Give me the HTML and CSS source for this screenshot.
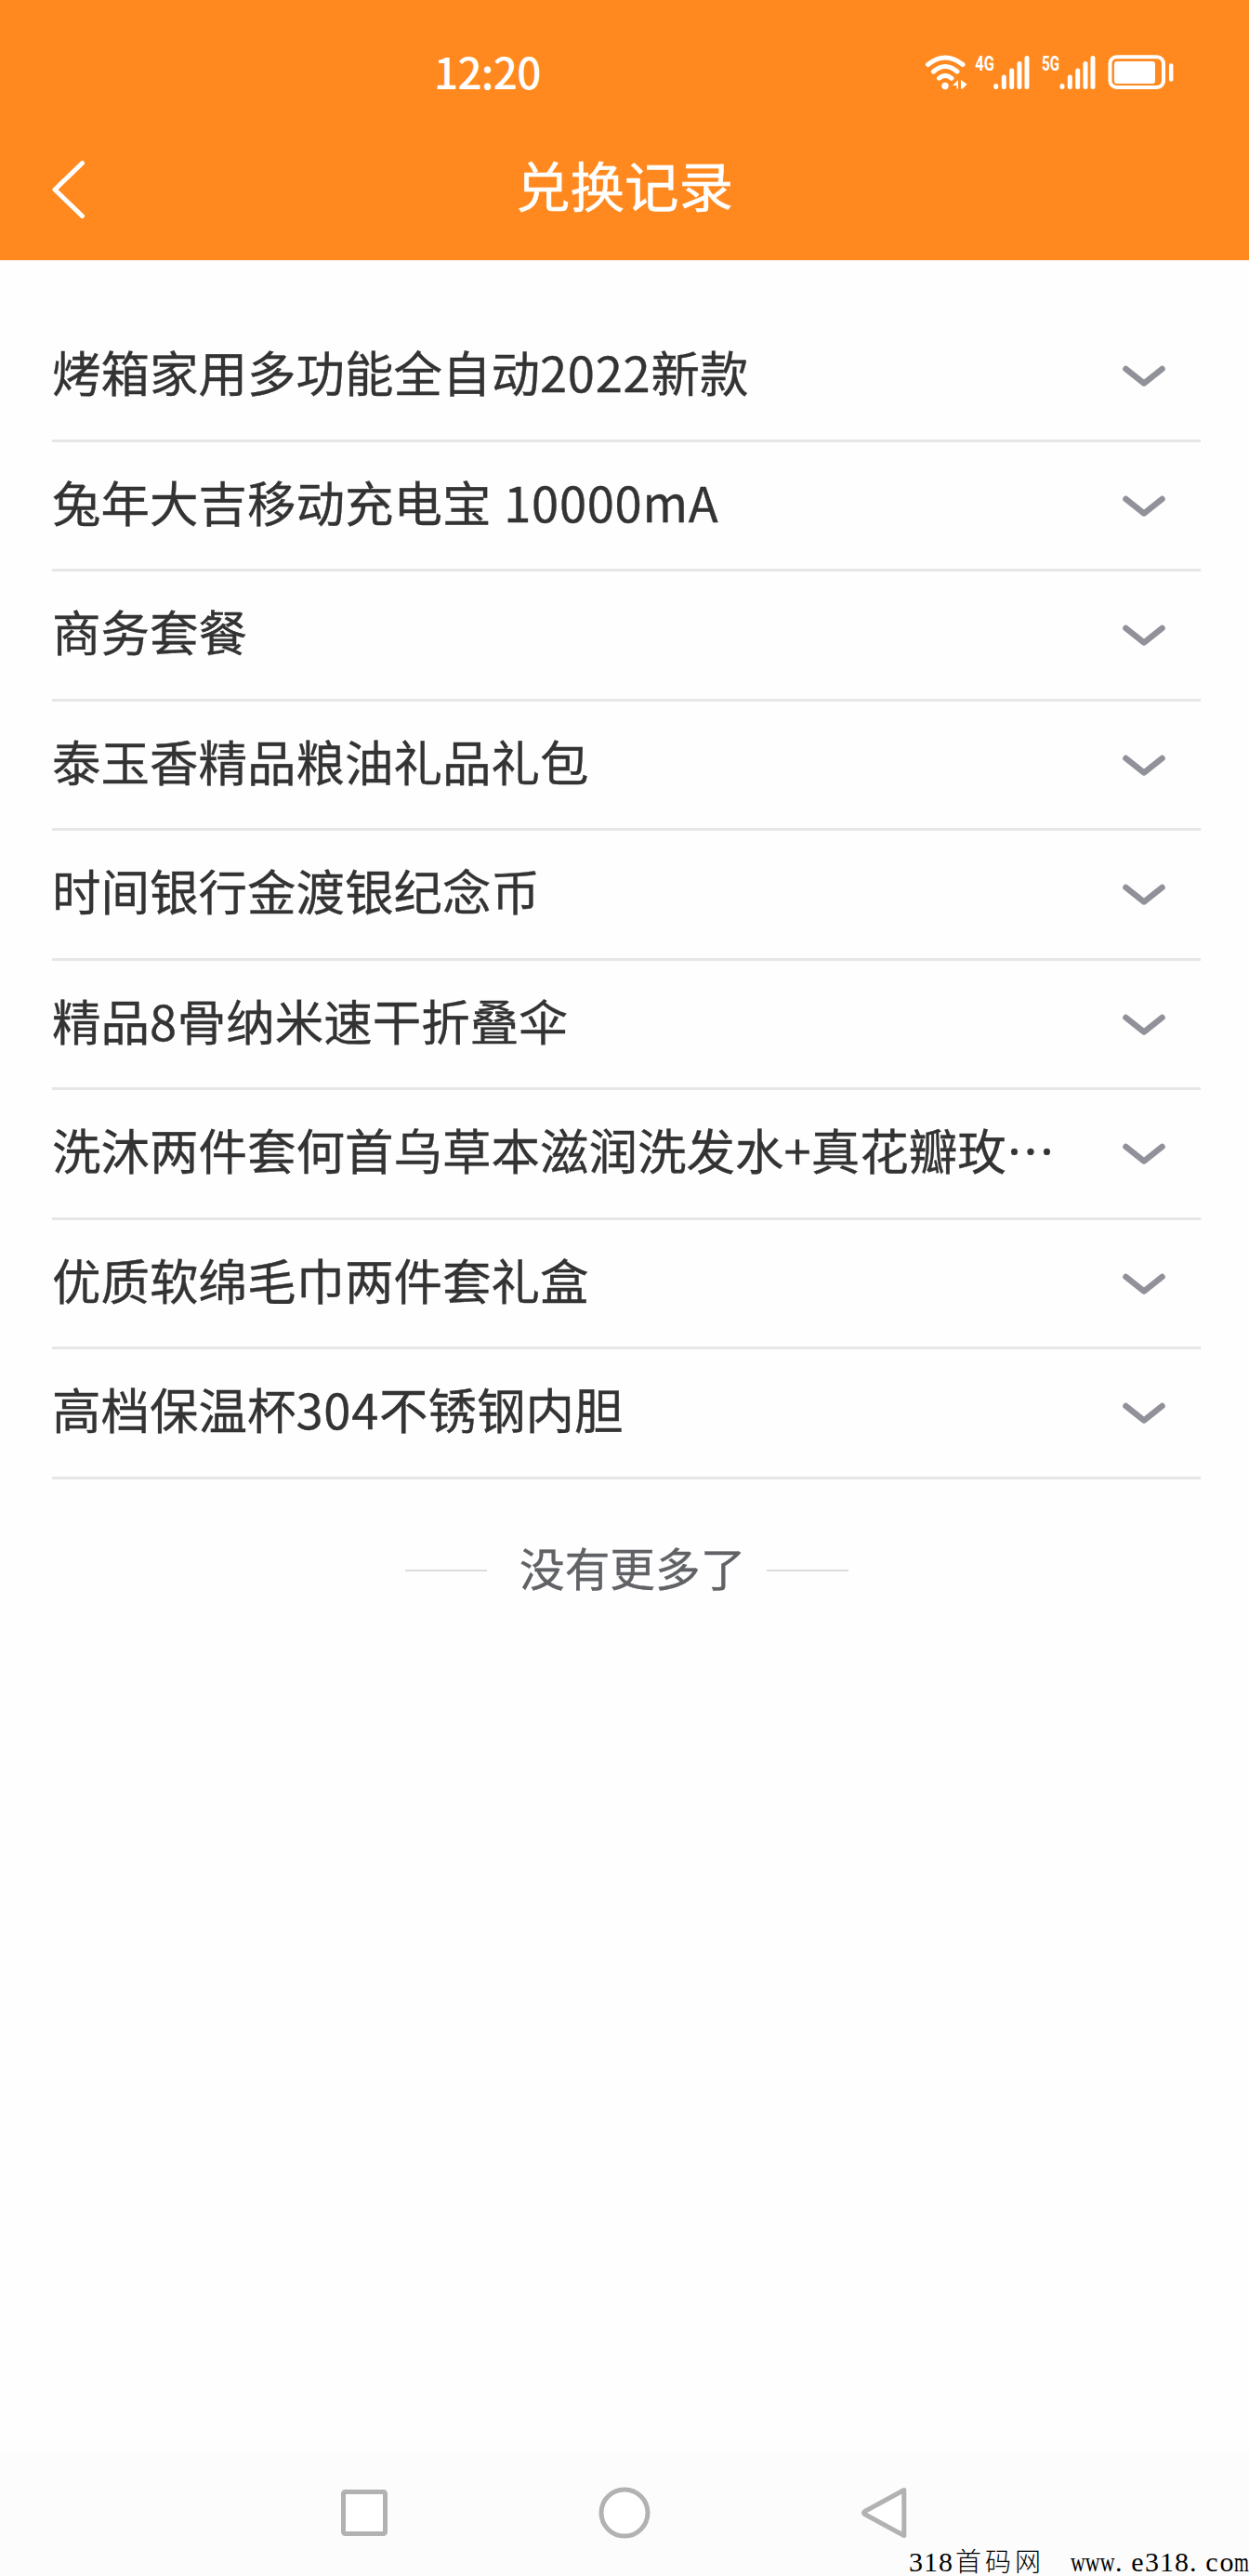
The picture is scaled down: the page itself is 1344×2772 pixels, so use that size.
FILE: index.html
```html
<!DOCTYPE html>
<html lang="zh-CN">
<head>
<meta charset="utf-8">
<title>兑换记录</title>
<link rel="stylesheet" href="styles.css">
</head>
<body>
<div class="screen">
  <header class="header">
    <div class="status">
      <span class="time">12:20</span>
      <svg class="status-icons" width="284" height="64" viewBox="0 -10 284 64" fill="none" stroke="#fff" stroke-linecap="round">
        <path d="M3.500 10.500Q22 -4.500 41 10.500M9.500 18Q22 7 35 18M15.500 25.200Q22 19.500 29 25.200" stroke-width="5"/>
        <circle cx="22" cy="33.500" r="3.700" fill="#fff" stroke="none"/>
        <path d="M36 27V36.500H34.500V33H30ZM39 27V36.500H41L45.500 31.500Z" fill="#fff" stroke="none"/>
        <text class="net" x="54.300" y="17" textLength="20.500" lengthAdjust="spacingAndGlyphs">4G</text>
        <path d="M76.700 34.500V33.500M85.300 34.500V24M93.700 34.500V17M102 34.500V9.500M110 34.500V3.500" stroke-width="5"/>
        <text class="net" x="126" y="17" textLength="19" lengthAdjust="spacingAndGlyphs">5G</text>
        <path d="M148 34.500V33.500M156.300 34.500V24M164.700 34.500V17M173 34.500V9.500M181 34.500V3.500" stroke-width="5"/>
        <rect x="199.500" y="2.300" width="57.500" height="32.700" rx="7" stroke-width="4"/>
        <rect x="204" y="7" width="44" height="24" rx="3" fill="#fff" stroke="none"/>
        <path d="M265.200 11.500V26.500" stroke-width="4.500"/>
      </svg>
    </div>
    <div class="titlebar">
      <svg class="back" width="40" height="64" viewBox="0 0 40 64"><path d="M34.500 3.500L5 32L34.500 60.500" fill="none" stroke="#fff" stroke-width="5" stroke-linecap="round" stroke-linejoin="round"/></svg>
      <h1 class="title">兑换记录</h1>
    </div>
  </header>
  <main class="content">
    <ul class="list">
      <li class="row"><span class="name">烤箱家用多功能全自动<span class="num">2022</span>新款</span><svg class="chevron" viewBox="0 0 46 24"><path d="M3.500 4L23 19.500L42.500 4"/></svg></li>
      <li class="row"><span class="name">兔年大吉移动充电宝 <span class="num lead">10000mA</span></span><svg class="chevron" viewBox="0 0 46 24"><path d="M3.500 4L23 19.500L42.500 4"/></svg></li>
      <li class="row"><span class="name">商务套餐</span><svg class="chevron" viewBox="0 0 46 24"><path d="M3.500 4L23 19.500L42.500 4"/></svg></li>
      <li class="row"><span class="name">泰玉香精品粮油礼品礼包</span><svg class="chevron" viewBox="0 0 46 24"><path d="M3.500 4L23 19.500L42.500 4"/></svg></li>
      <li class="row"><span class="name">时间银行金渡银纪念币</span><svg class="chevron" viewBox="0 0 46 24"><path d="M3.500 4L23 19.500L42.500 4"/></svg></li>
      <li class="row"><span class="name">精品<span class="num">8</span>骨纳米速干折叠伞</span><svg class="chevron" viewBox="0 0 46 24"><path d="M3.500 4L23 19.500L42.500 4"/></svg></li>
      <li class="row"><span class="name">洗沐两件套何首乌草本滋润洗发水+真花瓣玫…</span><svg class="chevron" viewBox="0 0 46 24"><path d="M3.500 4L23 19.500L42.500 4"/></svg></li>
      <li class="row"><span class="name">优质软绵毛巾两件套礼盒</span><svg class="chevron" viewBox="0 0 46 24"><path d="M3.500 4L23 19.500L42.500 4"/></svg></li>
      <li class="row"><span class="name">高档保温杯<span class="num">304</span>不锈钢内胆</span><svg class="chevron" viewBox="0 0 46 24"><path d="M3.500 4L23 19.500L42.500 4"/></svg></li>
    </ul>
    <div class="more"><span class="more-text">没有更多了</span></div>
  </main>
  <nav class="navbar">
    <svg class="nav-icon" viewBox="0 0 60 60"><rect x="7.500" y="7.500" width="45" height="45" rx="2"/></svg>
    <svg class="nav-icon" viewBox="0 0 60 60"><circle cx="30" cy="30" r="25"/></svg>
    <svg class="nav-icon" viewBox="0 0 60 60"><path d="M50.800 5.500V54.500L8.500 31.500Q6.500 30 8.500 28.500Z"/></svg>
    <div class="watermark"><span class="digits">318</span><span class="cn">首码网</span><span class="site"><i class="www">www</i><i class="cell dot">.</i><i class="cell">e</i><i class="digits">318</i><i class="cell dot">.</i><i class="cell">c</i><i class="cell">o</i><i class="m">m</i></span></div>
  </nav>
</div>
</body>
</html>
```
FILE: styles.css
```css
* {
  box-sizing: border-box;
}

body {
  margin: 0;
  background: #fefefe;
  color: #333;
  font-family: "Noto Sans CJK SC", sans-serif;
}

.screen {
  display: flex;
  flex-direction: column;
  width: 1344px;
  height: 2772px;
  overflow: hidden;
}

.header {
  height: 280px;
  background: #ff891e;
  color: #fff;
}

.status {
  display: flex;
  align-items: center;
  justify-content: space-between;
  height: 158px;
  padding: 0 65px 0 467px;
}

.time {
  margin-bottom: 6px;
  font-size: 46px;
  font-weight: 500;
  letter-spacing: -0.8px;
  line-height: 60px;
}

.status-icons {
  margin-top: 4px;
}

.net {
  fill: #fff;
  stroke: none;
  font-family: Roboto, sans-serif;
  font-size: 22px;
  font-weight: 700;
}

.titlebar {
  display: grid;
  grid-template-columns: 54px 1fr 54px;
  align-items: center;
  height: 92px;
}

.back {
  margin-left: 54px;
}

.title {
  margin: 0 0 12px;
  font-size: 58.5px;
  font-weight: 400;
  line-height: 80px;
  text-align: center;
  -webkit-text-stroke: 0.5px currentColor;
}

.content {
  flex: 1;
  padding: 56px 52px 0 56px;
}

.list {
  margin: 0;
  padding: 0;
  list-style: none;
}

.row {
  display: flex;
  align-items: center;
  justify-content: space-between;
  height: 139.5px;
  padding-right: 38px;
  border-bottom: 3px solid #e6e6e6;
}

.name {
  margin-bottom: 10px;
  font-size: 52.5px;
  line-height: 76px;
  white-space: nowrap;
  -webkit-text-stroke: 0.35px currentColor;
}

.num {
  letter-spacing: 0.7px;
}

.lead {
  margin-left: 2px;
}

.chevron {
  width: 46px;
  height: 24px;
  margin-top: 2px;
  fill: none;
  stroke: #919199;
  stroke-width: 6.5px;
  stroke-linecap: round;
  stroke-linejoin: round;
}

.more {
  display: flex;
  align-items: center;
  margin: 68px 0 0 380px;
  color: #606266;
  font-size: 48.7px;
  line-height: 70px;
}

.more::before,
.more::after {
  content: "";
  width: 88px;
  height: 2px;
  background: #dcdcdc;
}

.more-text {
  margin: -9px 23px 0 35px;
  -webkit-text-stroke: 0.35px currentColor;
}

.navbar {
  position: relative;
  display: flex;
  justify-content: center;
  gap: 220px;
  height: 135px;
  padding-top: 37px;
  background: #fcfcfc;
}

.nav-icon {
  width: 60px;
  height: 60px;
  fill: #fff;
  stroke: #b2b2b2;
  stroke-width: 5px;
  stroke-linejoin: round;
}

.watermark {
  position: absolute;
  right: 0;
  bottom: 0;
  display: flex;
  align-items: baseline;
  color: #000;
  font-family: "Liberation Serif", serif;
  font-size: 30px;
  line-height: 30px;
}

.digits {
  width: 48px;
  letter-spacing: 1px;
}

.cn {
  font-family: "Noto Sans CJK SC", sans-serif;
  font-size: 28px;
  font-weight: 300;
  letter-spacing: 4px;
  margin: 0 28px 0 2px;
}

.site {
  display: flex;
}

.site i {
  width: 16px;
  font-style: normal;
  text-align: center;
}

.site .digits {
  width: 48px;
}

.site .www {
  width: 48px;
  text-align: left;
  transform: scaleX(0.73);
  transform-origin: left;
}

.site .dot {
  text-align: left;
}

.site .m {
  text-align: left;
  transform: scaleX(0.68);
  transform-origin: left;
}
```
